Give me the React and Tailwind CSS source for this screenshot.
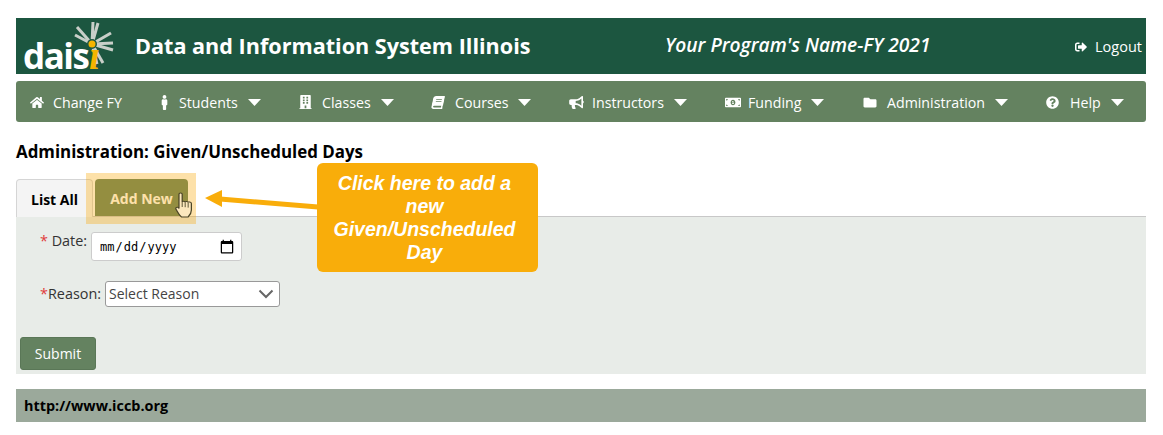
import React from 'react'
import {
  FaHome,
  FaMale,
  FaBuilding,
  FaBook,
  FaBullhorn,
  FaMoneyBillAlt,
  FaFolder,
  FaQuestionCircle,
  FaSignOutAlt,
} from 'react-icons/fa'

const navItems = [
  { label: 'Change FY', Icon: FaHome, w: 'w-[128px]', iw: 'w-[23px]', icon: 'w-[14px] h-[13px]', caret: false },
  { label: 'Students', Icon: FaMale, w: 'w-[141px]', iw: 'w-[21px]', icon: 'w-[13px] h-[15px]', caret: true },
  { label: 'Classes', Icon: FaBuilding, w: 'w-[133px]', iw: 'w-[23px]', icon: 'w-[13px] h-[14px]', caret: true },
  { label: 'Courses', Icon: FaBook, w: 'w-[137px]', iw: 'w-[23px]', icon: 'w-[12px] h-[13px] -skew-x-12', caret: true },
  { label: 'Instructors', Icon: FaBullhorn, w: 'w-[156px]', iw: 'w-[23px]', icon: 'w-[15px] h-[13px]', caret: true },
  { label: 'Funding', Icon: FaMoneyBillAlt, w: 'w-[138px]', iw: 'w-[23px]', icon: 'w-[16px] h-[13px]', caret: true },
  { label: 'Administration', Icon: FaFolder, w: 'w-[183px]', iw: 'w-[24px]', icon: 'w-[14px] h-[13px]', caret: true },
  { label: 'Help', Icon: FaQuestionCircle, w: 'w-[90px]', iw: 'w-[24px]', icon: 'w-[13px] h-[13px]', caret: true },
]

const rayEnds = [
  [70, 4],
  [75, 5],
  [54, 9],
  [52, 17],
  [88, 15],
  [90, 25],
  [90, 32],
  [80, 45],
  [74, 46],
]

const Logo = () => (
  <div className="relative w-[100px] h-[56px] ml-[7px] mr-[12px] shrink-0">
    <svg viewBox="0 0 100 56" className="absolute left-0 top-0 w-[100px] h-[56px]">
      {rayEnds.map(([x, y]) => (
        <path key={`${x}-${y}`} d={`M69 26 L${x} ${y}`} stroke="#c9cfc9" strokeWidth="3" fill="none" />
      ))}
      <circle cx="69" cy="26" r="5" fill="#1c5640" />
      <circle cx="69" cy="26" r="3.5" fill="#f5b400" />
    </svg>
    <span className="absolute left-0 bottom-[0px] text-[35px] leading-[37px] font-bold text-white tracking-[-1.5px] font-['Open_Sans',sans-serif]">
      dais
    </span>
    <span className="absolute left-[66px] bottom-[-3px] text-[40px] leading-[42px] font-bold italic text-[#f5b400] font-['Liberation_Serif',serif]">
      ı
    </span>
  </div>
)

const Cursor = () => (
  <svg viewBox="0 0 14.5 26" preserveAspectRatio="none" className="w-[18px] h-[26px]">
    <path
      d="M3.2 2.2c0-1.6 2.6-1.6 2.6 0V10c0-1 2.4-1 2.4 0.2 0-1 2.4-1 2.4 0.4 0-1 2.6-.8 2.6 .8v6.5c0 3-1.4 5.5-2.6 7H5.2C3.6 23.5 2.2 20 0.9 17.5c-.9-1.8 .9-3 2-1.8l.3 .8Z"
      fill="#fbe7bd"
      stroke="#4a4426"
      strokeWidth="1"
    />
    <path d="M5.8 10v5M8.2 10.2v5M10.6 10.6v5" stroke="#4a4426" strokeWidth="0.8" />
  </svg>
)

const App = () => {
  return (
    <div className="relative w-[1163px] h-[435px] bg-white overflow-hidden pt-[18px] pl-[16px] pr-[17px] font-['Open_Sans',sans-serif]">
      <header className="flex items-center h-[56px] bg-[#1c5640] text-white">
        <Logo />
        <h1 className="w-[530px] text-[21.6px] font-bold leading-none whitespace-nowrap -mt-[1px]">
          Data and Information System Illinois
        </h1>
        <div className="w-[345px] text-[19.2px] font-semibold italic leading-none whitespace-nowrap -mt-[3px]">
          Your Program's Name-FY 2021
        </div>
        <div className="flex flex-1 items-center justify-end gap-[8px] pr-[4px] text-[14.5px] whitespace-nowrap mt-[2px]">
          <FaSignOutAlt className="w-[12px] h-[12px]" />
          Logout
        </div>
      </header>

      <nav className="flex items-center h-[41px] mt-[7px] pl-[14px] pt-[2px] bg-[#648260] rounded-[3px] text-white text-[14.2px]">
        {navItems.map(({ label, Icon, w, iw, icon, caret }) => (
          <div key={label} className={`flex items-center shrink-0 ${w}`}>
            <span className={`shrink-0 ${iw}`}>
              <Icon className={icon} />
            </span>
            <span className="whitespace-nowrap">{label}</span>
            {caret && (
              <svg viewBox="0 0 13 7" className="w-[13px] h-[7px] ml-[10px]">
                <path d="M0 0h13L6.5 7Z" fill="#ffffff" />
              </svg>
            )}
          </div>
        ))}
      </nav>

      <h2 className="mt-[20px] h-[19px] text-[16.9px] leading-[19px] font-bold text-black whitespace-nowrap">
        Administration: Given/Unscheduled Days
      </h2>

      <div className="flex mt-[18px] h-[37px] text-[14px] font-bold">
        <div className="flex items-center justify-center w-[77px] h-[38px] pt-[1px] border border-[#d5d5d5] border-b-0 rounded-t-[4px] bg-[#f4f4f4] text-black">
          List All
        </div>
        <div className="flex items-center justify-center w-[93px] ml-[2px] pt-[2px] rounded-t-[4px] bg-[#5f805f] text-white">
          Add New
        </div>
      </div>

      <main className="h-[158px] bg-[#e8ece8] border-t border-[#c8c8c8] pl-[4px] text-[14.4px] text-[#333333]">
        <div className="flex items-start h-[64px] pt-[15px] pl-[20px]">
          <label className="leading-[19px] -mt-px mr-[4px] whitespace-nowrap">
            <span className="text-[#e03a3a]">*</span> Date:
          </label>
          <input
            type="date"
            className="w-[151px] h-[29px] pl-[7px] pr-[6px] bg-white border border-[#cccccc] rounded-[3px] text-[12px] text-black font-['DejaVu_Sans_Mono',monospace] [&::-webkit-calendar-picker-indicator]:w-[16px] [&::-webkit-calendar-picker-indicator]:h-[16px] [&::-webkit-calendar-picker-indicator]:m-0 [&::-webkit-calendar-picker-indicator]:p-0"
          />
        </div>
        <div className="flex items-center h-[26px] pl-[20px]">
          <label className="mr-[4px] whitespace-nowrap">
            <span className="text-[#e03a3a]">*</span>Reason:
          </label>
          <div className="relative w-[175px] h-[26px]">
            <select className="w-full h-full pl-[3px] pb-[2px] appearance-none bg-white border border-[#999999] rounded-[3px] text-[14px] text-[#444444]">
              <option>Select Reason</option>
            </select>
            <svg viewBox="0 0 16 10" className="absolute right-[6px] top-[8px] w-[16px] h-[10px] pointer-events-none">
              <path d="M1.5 1.5 8 8l6.5-6.5" fill="none" stroke="#666666" strokeWidth="2" />
            </svg>
          </div>
        </div>
        <button className="block mt-[30px] w-[76px] h-[33px] bg-[#648260] border border-[#5a7757] rounded-[3px] text-white text-[14px]">
          Submit
        </button>
      </main>

      <footer className="flex items-center h-[33px] mt-[15px] pl-[8px] bg-[#9ba99b] text-[14.4px] font-bold text-black">
        http://www.iccb.org
      </footer>

      {/* callout overlays */}
      <div className="absolute left-[86px] top-[173px] w-[110px] h-[51px] bg-[#f9aa0a]/35" />
      <div className="absolute left-[175px] top-[192px]">
        <Cursor />
      </div>
      <svg viewBox="0 0 120 40" className="absolute left-[200px] top-[185px] w-[120px] h-[40px]">
        <path d="M118 22 L20 14" stroke="#f9ad0a" strokeWidth="5" fill="none" />
        <path d="M5 13 L22 5 L22 22 Z" fill="#f9ad0a" />
      </svg>
      <div className="absolute left-[317px] top-[163px] w-[221px] h-[109px] flex items-center justify-center rounded-[6px] bg-[#f9ad0a] pl-[5px] pr-[11px] text-center text-white text-[19.5px] leading-[23px] font-bold italic font-['Liberation_Sans',sans-serif]">
        <span>Click here to add a new Given/Unscheduled Day</span>
      </div>
    </div>
  )
}

export default App
